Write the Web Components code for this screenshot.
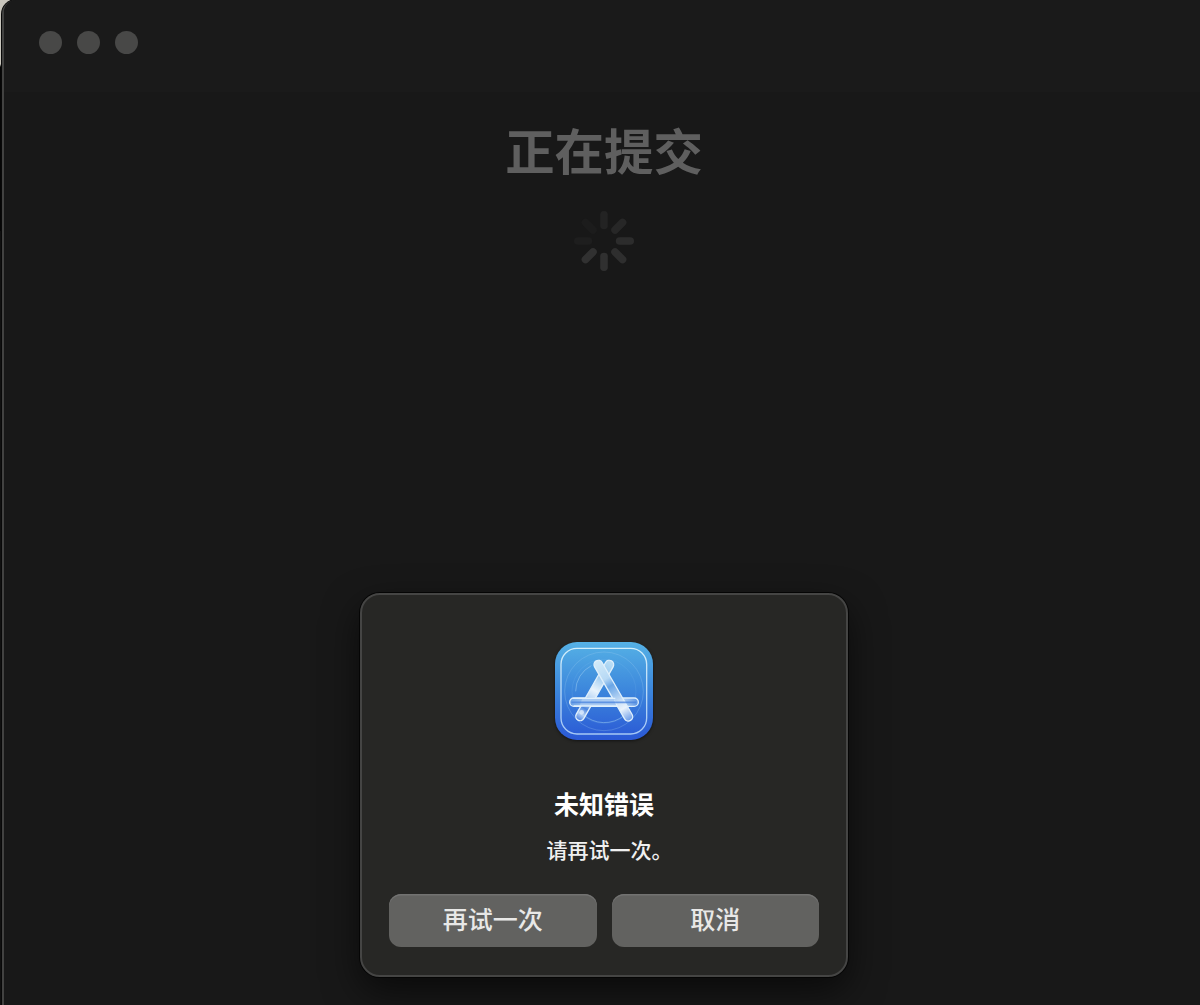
<!DOCTYPE html>
<html lang="zh-CN">
<head>
<meta charset="UTF-8">
<title>正在提交</title>
<style>
  body {
    margin: 0;
    width: 1200px;
    height: 1005px;
    overflow: hidden;
    background: linear-gradient(#c9c6bd 0 64px, #050505 67px 231px, #101010 231px);
    font-family: "Liberation Sans", "Noto Sans CJK SC", sans-serif;
  }
</style>
</head>
<body>
<app-window>
  <traffic-lights slot="bar"></traffic-lights>
  <submit-status>正在提交</submit-status>
  <alert-dialog slot="sheet">
    <store-icon slot="icon"></store-icon>
    <span slot="title">未知错误</span>
    <span slot="message">请再试一次。</span>
    <push-button slot="actions">再试一次</push-button>
    <push-button slot="actions">取消</push-button>
  </alert-dialog>
</app-window>

<script>
// Window frame
class AppWindow extends HTMLElement {
  constructor() {
    super();
    this.attachShadow({ mode: 'open' });
  }

  connectedCallback() {
    this.shadowRoot.innerHTML = `
      <style>
        :host {
          display: grid;
          grid-template-rows: 92px 1fr auto;
          box-sizing: border-box;
          width: 1218px;
          height: 1035px;
          margin-left: 2px;
          padding-bottom: 56px;
          border: 2px solid #424241;
          border-top: 0;
          border-radius: 14px;
          background: #181818;
          box-shadow: 0 0 0 1px #080808;
        }
        .bar {
          background: #1a1a1a;
          border-radius: 12px 0 0 0;
        }
        .content, .sheet {
          width: 1200px;
          display: flex;
          justify-content: center;
        }
      </style>
      <div class="bar"><slot name="bar"></slot></div>
      <div class="content"><slot></slot></div>
      <div class="sheet"><slot name="sheet"></slot></div>
    `;
  }
}

// Inactive close / minimise / zoom buttons
class TrafficLights extends HTMLElement {
  constructor() {
    super();
    this.attachShadow({ mode: 'open' });
  }

  connectedCallback() {
    this.shadowRoot.innerHTML = `
      <style>
        :host {
          display: flex;
          gap: 15px;
          padding: 31px 0 0 35px;
        }
        i {
          width: 23px;
          height: 23px;
          border-radius: 50%;
          background: #484847;
        }
      </style>
      <i></i><i></i><i></i>
    `;
  }
}

// Heading with a spinner under it
class SubmitStatus extends HTMLElement {
  constructor() {
    super();
    this.attachShadow({ mode: 'open' });
  }

  connectedCallback() {
    const shades = ['#232323', '#272727', '#2c2c2c', '#2e2e2e', '#303030', '#313131', '#1e1e1e', '#1c1c1c'];

    this.shadowRoot.innerHTML = `
      <style>
        :host {
          display: flex;
          flex-direction: column;
          align-items: center;
          padding-top: 25px;
        }
        h1 {
          margin: 0;
          font-size: 49.4px;
          line-height: 72px;
          font-weight: 700;
          color: #5f5f5f;
        }
        svg {
          display: block;
          margin-top: 21px;
        }
      </style>
      <h1><slot></slot></h1>
      <svg width="62" height="62" viewBox="-31 -31 62 62" stroke-width="7.6" stroke-linecap="round">
        ${shades.map((shade, i) => `<line y1="-26.2" y2="-15.6" stroke="${shade}" transform="rotate(${i * 45})"/>`).join('')}
      </svg>
    `;
  }
}

// Alert
class AlertDialog extends HTMLElement {
  constructor() {
    super();
    this.attachShadow({ mode: 'open' });
  }

  connectedCallback() {
    this.shadowRoot.innerHTML = `
      <style>
        :host {
          display: flex;
          flex-direction: column;
          align-items: center;
          box-sizing: border-box;
          width: 488px;
          height: 384px;
          padding: 47px 27px 0;
          border: 2px solid #454544;
          border-radius: 20px;
          background: #272725;
          box-shadow: 0 0 0 1px #050505, 0 14px 36px rgba(0,0,0,0.6);
        }
        .title {
          margin-top: 47px;
          font-size: 25px;
          line-height: 36px;
          font-weight: 700;
          color: #fff;
        }
        .message {
          margin-top: 13px;
          padding-left: 11px;
          font-size: 21px;
          line-height: 30px;
          font-weight: 500;
          color: #f0f0f0;
        }
        .actions {
          display: grid;
          grid-template-columns: 1fr 1fr;
          gap: 15px;
          width: 430px;
          margin-top: 28px;
        }
      </style>
      <slot name="icon"></slot>
      <div class="title"><slot name="title"></slot></div>
      <div class="message"><slot name="message"></slot></div>
      <div class="actions"><slot name="actions"></slot></div>
    `;
  }
}

// Dialog button
class PushButton extends HTMLElement {
  constructor() {
    super();
    this.attachShadow({ mode: 'open' });
  }

  connectedCallback() {
    this.shadowRoot.innerHTML = `
      <style>
        :host {
          display: block;
        }
        button {
          display: block;
          width: 100%;
          height: 53px;
          padding: 0 0 5px;
          border: 0;
          border-radius: 12px;
          background: #626260;
          box-shadow: inset 0 1.5px 0 #727271;
          font: 500 25px "Liberation Sans", "Noto Sans CJK SC", sans-serif;
          color: #e8e8e7;
        }
      </style>
      <button><slot></slot></button>
    `;
  }
}

// App icon
class StoreIcon extends HTMLElement {
  constructor() {
    super();
    this.attachShadow({ mode: 'open' });
  }

  connectedCallback() {
    this.shadowRoot.innerHTML = `
      <style>
        :host {
          display: block;
          width: 98px;
          height: 98px;
        }
        svg {
          display: block;
          overflow: visible;
          filter: drop-shadow(0 1px 1.5px rgba(0,0,0,0.5));
        }
      </style>
      <svg width="98" height="98" viewBox="30 30 294 294">
        <defs>
          <linearGradient id="bg" x1="0" y1="0" x2="0" y2="1">
            <stop offset="0" stop-color="#55b1e5"/>
            <stop offset="0.5" stop-color="#3c86dc"/>
            <stop offset="1" stop-color="#2a58d5"/>
          </linearGradient>
          <linearGradient id="line" x1="0" y1="0" x2="0" y2="1">
            <stop offset="0" stop-color="#d2eefa"/>
            <stop offset="1" stop-color="#a5c8f5"/>
          </linearGradient>
          <linearGradient id="rodA" x1="0" y1="0" x2="0" y2="1">
            <stop offset="0" stop-color="#bde0f6"/>
            <stop offset="0.25" stop-color="#94c6ef"/>
            <stop offset="0.5" stop-color="#e8f3fc"/>
            <stop offset="0.7" stop-color="#a5caf2"/>
            <stop offset="0.8" stop-color="#4c86df"/>
            <stop offset="0.9" stop-color="#b4d2f5"/>
            <stop offset="1" stop-color="#4c80e0"/>
          </linearGradient>
          <linearGradient id="rodB" x1="0" y1="0" x2="0" y2="1">
            <stop offset="0" stop-color="#d3ebf9"/>
            <stop offset="0.3" stop-color="#b7d9f5"/>
            <stop offset="0.42" stop-color="#69a5e6"/>
            <stop offset="0.7" stop-color="#cfe3f8"/>
            <stop offset="0.8" stop-color="#eaf3fc"/>
            <stop offset="1" stop-color="#699ae8"/>
          </linearGradient>
          <linearGradient id="rodC" x1="0" y1="0" x2="1" y2="0">
            <stop offset="0" stop-color="#6ba3e7"/>
            <stop offset="0.3" stop-color="#a8caf2"/>
            <stop offset="0.6" stop-color="#e5f0fb"/>
            <stop offset="0.8" stop-color="#a8caf2"/>
            <stop offset="1" stop-color="#5b94e3"/>
          </linearGradient>
        </defs>
        <rect x="30" y="30" width="294" height="294" rx="66" fill="url(#bg)"/>
        <rect x="48" y="49" width="257" height="257" rx="48" fill="none" stroke="url(#line)" stroke-width="4"/>
        <g fill="none" stroke="#9ccdf2" stroke-width="2.4">
          <circle cx="177" cy="178" r="118" stroke-opacity="0.35"/>
          <circle cx="177" cy="178" r="96" stroke-opacity="0.14"/>
          <path d="M92 178A86 86 0 0 1 139 101M113 246A94 94 0 0 0 238 250" stroke-opacity="0.65"/>
        </g>
        <g stroke="#e0f0fc" stroke-width="4">
          <rect x="74" y="198" width="206" height="25" rx="12.5" fill="url(#rodC)"/>
          <rect x="-13" y="-13" width="26" height="204" rx="13" fill="url(#rodA)" transform="translate(193 98) rotate(29.5)"/>
          <rect x="-13" y="-13" width="26" height="206" rx="13" fill="url(#rodB)" transform="translate(160 98) rotate(-30)"/>
        </g>
        <path d="M112 199H206L214 222H104z" fill="#a9cbf3"/>
        <path d="M79 211H274" stroke="#4781dc" stroke-opacity="0.75" stroke-width="5"/>
        <path d="M84 199H211M86 222H218" stroke="#e0f0fc" stroke-width="4"/>
        <circle cx="110" cy="241" r="7" fill="#dcebfc" opacity="0.8"/>
      </svg>
    `;
  }
}

customElements.define('app-window', AppWindow);
customElements.define('traffic-lights', TrafficLights);
customElements.define('submit-status', SubmitStatus);
customElements.define('alert-dialog', AlertDialog);
customElements.define('push-button', PushButton);
customElements.define('store-icon', StoreIcon);
</script>
</body>
</html>
